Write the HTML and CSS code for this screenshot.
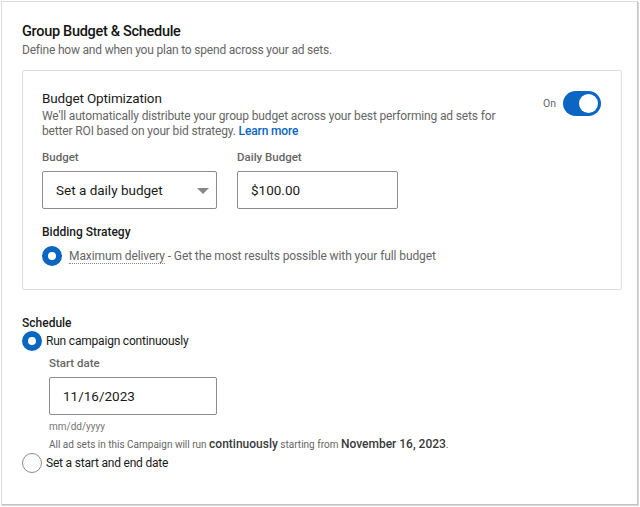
FILE: index.html
```html
<!DOCTYPE html>
<html>
<head>
<meta charset="utf-8">
<link rel="stylesheet" href="styles.css">
</head>
<body>
<div class="card">
  <h2 class="title">Group Budget &amp; Schedule</h2>
  <p class="subtitle">Define how and when you plan to spend across your ad sets.</p>

  <div class="box">
    <div class="opt-head">
      <div class="opt-text">
        <div class="opt-title">Budget Optimization</div>
        <div class="opt-desc">We'll automatically distribute your group budget across your best performing ad sets for<br>better ROI based on your bid strategy. <a class="link">Learn more</a></div>
      </div>
      <div class="toggle-wrap">
        <span class="toggle-label">On</span>
        <span class="toggle"><span class="knob"></span></span>
      </div>
    </div>

    <div class="fields">
      <div class="field">
        <div class="label">Budget</div>
        <div class="input select">Set a daily budget<span class="caret"></span></div>
      </div>
      <div class="field">
        <div class="label">Daily Budget</div>
        <div class="input money">$100.00</div>
      </div>
    </div>

    <div class="strategy-label">Bidding Strategy</div>
    <div class="radio-row">
      <span class="radio on"></span>
      <span class="strategy-text"><span class="dotted">Maximum delivery</span> - Get the most results possible with your full budget</span>
    </div>
  </div>

  <div class="schedule">
    <div class="schedule-label">Schedule</div>
    <div class="radio-row sched">
      <span class="radio on"></span>
      <span class="radio-text">Run campaign continuously</span>
    </div>
    <div class="start">
      <div class="label">Start date</div>
      <div class="input date">11/16/2023</div>
      <div class="hint">mm/dd/yyyy</div>
      <div class="note">All ad sets in this Campaign will run <b>continuously</b> starting from <b>November 16, 2023</b>.</div>
    </div>
    <div class="radio-row sched last">
      <span class="radio"></span>
      <span class="radio-text">Set a start and end date</span>
    </div>
  </div>
</div>
</body>
</html>
```
FILE: styles.css
```css
* { box-sizing: border-box; }
html, body { margin: 0; padding: 0; background: #fff; }
body {
  font-family: Roboto, "Noto Sans", sans-serif;
  color: #1a1a1a;
  padding: 1px 2px 2px 1px;
}
.card {
  width: 637px;
  height: 504px;
  border: 1px solid #dcdcdc;
  border-right-color: #c4c4c4;
  border-bottom-color: #c4c4c4;
  box-shadow: 1px 1px 0 #d8d8d8;
  padding: 21px 20px 0 20px;
}
.title {
  margin: 0;
  font-size: 14.5px;
  font-weight: 500;
  line-height: 17px;
  letter-spacing: -0.3px;
  color: #141414;
}
.subtitle {
  margin: 3px 0 0;
  font-size: 12px;
  line-height: 15px;
  letter-spacing: -0.2px;
  color: #666;
}
.box {
  margin-top: 12px;
  border: 1px solid #dedede;
  border-radius: 2px;
  width: 600px;
  height: 220px;
  padding: 19px 19px 0 19px;
}
.opt-head { display: flex; justify-content: space-between; }
.opt-text { width: 480px; }
.opt-title { font-size: 13.5px; line-height: 17px; letter-spacing: -0.15px; color: #1a1a1a; }
.opt-desc { margin-top: 2px; font-size: 12px; line-height: 15px; letter-spacing: -0.15px; color: #666; white-space: nowrap; }
.link { color: #0a66c2; font-weight: 500; }
.toggle-wrap { display: flex; align-items: center; gap: 7px; height: 26px; margin-top: 0px; margin-right: 1px; }
.toggle-label { font-size: 10.5px; color: #666; }
.toggle {
  width: 38px; height: 25px; border-radius: 13px;
  background: #0a66c2; position: relative; display: block;
}
.knob {
  position: absolute; right: 3px; top: 3px;
  width: 19px; height: 19px; border-radius: 50%; background: #fff;
}
.fields { display: flex; gap: 20px; margin-top: 11px; }
.label { font-size: 11.5px; font-weight: 500; color: #666; line-height: 14px; }
.input {
  margin-top: 7px;
  border: 1px solid #8c8c8c;
  border-radius: 2px;
  height: 38px;
  display: flex; align-items: center;
  font-size: 13.5px; color: #1a1a1a;
  padding: 0 13px;
}
.select { width: 175px; position: relative; }
.caret {
  position: absolute; right: 7px; top: 16px;
  width: 0; height: 0;
  border-left: 6px solid transparent; border-right: 6px solid transparent;
  border-top: 6px solid #888;
}
.money { width: 161px; }
.strategy-label { margin-top: 16px; font-size: 12px; font-weight: 500; color: #1a1a1a; line-height: 15px; }
.radio-row { display: flex; align-items: center; }
.box .radio-row { margin-top: 6px; gap: 7px; }
.radio {
  width: 20px; height: 20px; border-radius: 50%;
  border: 1px solid #8c8c8c; background: #fff; flex: none;
}
.radio.on { border: 6px solid #0a66c2; }
.strategy-text { font-size: 12px; letter-spacing: -0.1px; color: #666; }
.dotted { border-bottom: 1px dotted #888; }
.schedule { margin-top: 26px; }
.schedule-label { font-size: 12px; font-weight: 500; line-height: 15px; color: #1a1a1a; }
.sched { gap: 4px; margin-top: 0; }
.radio-text { font-size: 12px; letter-spacing: -0.2px; color: #1a1a1a; }
.start { padding-left: 27px; margin-top: 5px; margin-bottom: 1px; }
.date { width: 168px; margin-top: 7px; }
.hint { font-size: 10px; color: #777; margin-top: 5px; line-height: 13px; }
.note { font-size: 10px; color: #666; margin-top: 4px; line-height: 15px; }
.note b { font-size: 12px; font-weight: 500; color: #3a3a3a; }
```
